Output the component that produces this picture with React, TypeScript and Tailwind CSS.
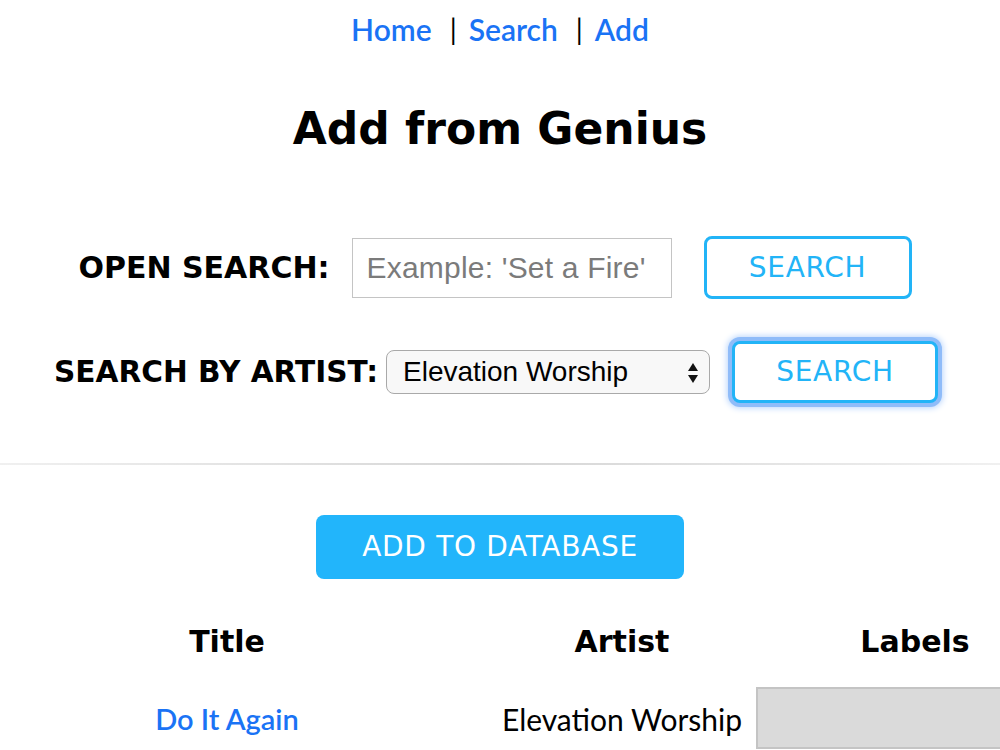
const NavLink = ({ label }: { label: string }) => (
    <a href="#" className="text-[#1a73f5] font-semibold no-underline">
        {label}
    </a>
);

const Divider = () => <span className="ml-[18px] mr-[12px] text-[28px] text-black">|</span>;

const OutlineButton = ({ focused }: { focused?: boolean }) => (
    <button
        className={
            focused
                ? "w-[206px] h-[62px] rounded-lg border-[3px] border-[#22b4f7] bg-white text-[#22b4f7] text-[28px] tracking-wide font-['DejaVu_Sans',sans-serif] shadow-[0_0_0_4px_#8fbcf9,0_0_6px_5px_#b9d5fc]"
                : "w-[208px] h-[63px] rounded-lg border-[3px] border-[#22b4f7] bg-white text-[#22b4f7] text-[28px] tracking-wide font-['DejaVu_Sans',sans-serif]"
        }
    >
        SEARCH
    </button>
);

const SelectArrows = () => (
    <svg className="absolute right-[10px] top-[11px]" width="12" height="22" viewBox="0 0 12 22">
        <path d="M6 1 L11 9 L1 9 Z" fill="#111" />
        <path d="M6 21 L11 13 L1 13 Z" fill="#111" />
    </svg>
);

export default function App() {
    return (
        <div className="w-[1000px] h-[750px] overflow-hidden bg-white text-black">
            <nav className="flex justify-center items-center pt-[9px] text-[30px] leading-[40px] font-['Lato','Noto_Sans',sans-serif]">
                <NavLink label="Home" />
                <Divider />
                <NavLink label="Search" />
                <Divider />
                <NavLink label="Add" />
            </nav>

            <h1 className="text-center text-[44px] font-bold mt-[52px] leading-[56px] font-['DejaVu_Sans',sans-serif]">
                Add from Genius
            </h1>

            <div className="flex items-center justify-center mt-[79px] ml-[-10px]">
                <label className="text-[30px] font-bold mr-[22px] font-['DejaVu_Sans',sans-serif]">OPEN SEARCH:</label>
                <input
                    placeholder="Example: 'Set a Fire'"
                    className="w-[320px] h-[60px] border border-[#c4c4c4] px-[14px] text-[30px] tracking-[0.2px] placeholder:text-[#7b7b7b] mr-[32px] outline-none font-['Liberation_Sans',Arial,sans-serif]"
                />
                <OutlineButton />
            </div>

            <div className="flex items-center justify-center mt-[42px] ml-[-8px]">
                <label className="text-[29.6px] font-bold mr-[8px] font-['DejaVu_Sans',sans-serif]">SEARCH BY ARTIST:</label>
                <div className="relative w-[324px] h-[44px] rounded-lg border border-[#a9a9a9] bg-[#f8f8f8] flex items-center pl-[16px] text-[28px] mr-[22px] font-['Liberation_Sans',Arial,sans-serif]">
                    Elevation Worship
                    <SelectArrows />
                </div>
                <OutlineButton focused />
            </div>

            <hr className="mt-[60px] border-0 h-[2px] bg-gradient-to-r from-[#f0f0f0] via-[#d6d6d6] to-[#f0f0f0]" />

            <div className="flex justify-center mt-[50px]">
                <button className="w-[368px] h-[64px] rounded-lg bg-[#22b5fb] text-white text-[28px] tracking-wide font-['DejaVu_Sans',sans-serif]">
                    ADD TO DATABASE
                </button>
            </div>

            <div className="grid grid-cols-[454px_302px_318px] mt-[38px] w-[1074px]">
                <div className="text-center text-[30px] font-bold h-[50px] leading-[50px] font-['DejaVu_Sans',sans-serif]">Title</div>
                <div className="text-center text-[30px] font-bold h-[50px] leading-[50px] pl-[34px] font-['DejaVu_Sans',sans-serif]">Artist</div>
                <div className="text-center text-[30px] font-bold h-[50px] leading-[50px] font-['DejaVu_Sans',sans-serif]">Labels</div>

                <div className="flex items-center justify-center h-[82px] pt-[22px] text-[29px] text-[#1a73f5] font-semibold font-['Lato','Noto_Sans',sans-serif]">
                    Do It Again
                </div>
                <div className="flex items-center justify-center h-[82px] pt-[22px] pl-[34px] text-[30px] font-['Lato','Noto_Sans',sans-serif]">
                    Elevation Worship
                </div>
                <div className="pt-[20px]">
                    <div className="h-[62px] bg-[#dadada] border-2 border-[#c4c4c4]" />
                </div>
            </div>
        </div>
    );
}
